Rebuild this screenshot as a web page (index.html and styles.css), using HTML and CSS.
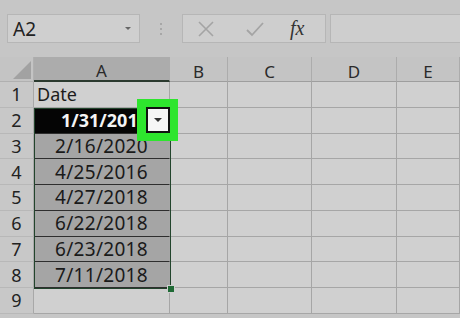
FILE: index.html
```html
<!DOCTYPE html>
<html lang="en">
<head>
<meta charset="UTF-8">
<title>Sheet</title>
<link rel="stylesheet" href="styles.css">
</head>
<body>
<div class="toolbar">
	<div class="namebox"><span>A2</span><span class="caret"></span></div>
	<div class="dots"><i></i><i></i><i></i></div>
	<div class="fnbox">
		<svg class="ico" width="22" height="22" viewBox="0 0 22 22"><path d="M4 4 L18 18 M18 4 L4 18" stroke="#a4a4a4" stroke-width="1.6" fill="none"/></svg>
		<svg class="ico" width="22" height="22" viewBox="0 0 22 22"><path d="M3 12 L8 17 L19 5" stroke="#a4a4a4" stroke-width="1.8" fill="none"/></svg>
		<span class="fx">fx</span>
	</div>
	<div class="formula"></div>
</div>

<div class="sheet">
	<div class="grid">
		<div class="corner"><span class="tri"></span></div>
		<div class="colhead sel">A</div>
		<div class="colhead">B</div>
		<div class="colhead">C</div>
		<div class="colhead">D</div>
		<div class="colhead">E</div>

		<div class="rowhead">1</div><div class="cell text">Date</div><div class="cell"></div><div class="cell"></div><div class="cell"></div><div class="cell"></div>
		<div class="rowhead">2</div><div class="cell active">1/31/2019</div><div class="cell"></div><div class="cell"></div><div class="cell"></div><div class="cell"></div>
		<div class="rowhead">3</div><div class="cell picked">2/16/2020</div><div class="cell"></div><div class="cell"></div><div class="cell"></div><div class="cell"></div>
		<div class="rowhead">4</div><div class="cell picked">4/25/2016</div><div class="cell"></div><div class="cell"></div><div class="cell"></div><div class="cell"></div>
		<div class="rowhead">5</div><div class="cell picked">4/27/2018</div><div class="cell"></div><div class="cell"></div><div class="cell"></div><div class="cell"></div>
		<div class="rowhead">6</div><div class="cell picked">6/22/2018</div><div class="cell"></div><div class="cell"></div><div class="cell"></div><div class="cell"></div>
		<div class="rowhead">7</div><div class="cell picked">6/23/2018</div><div class="cell"></div><div class="cell"></div><div class="cell"></div><div class="cell"></div>
		<div class="rowhead">8</div><div class="cell picked">7/11/2018</div><div class="cell"></div><div class="cell"></div><div class="cell"></div><div class="cell"></div>
		<div class="rowhead">9</div><div class="cell"></div><div class="cell"></div><div class="cell"></div><div class="cell"></div><div class="cell"></div>
	</div>
	<!-- selection frame and the filter button callout lie over the grid -->
	<div class="selframe"><span class="handle"></span></div>
	<div class="callout"><div class="dropbtn"><span class="caret dark"></span></div></div>
</div>
</body>
</html>
```

FILE: styles.css
```css
html, body {
	margin: 0;
	padding: 0;
}
body {
	width: 460px;
	height: 318px;
	overflow: hidden;
	background: #c6c6c6;
	font-family: "Noto Sans", "Open Sans", sans-serif;
	color: #1c1c1c;
}
.toolbar {
	display: flex;
	align-items: center;
	height: 57px;
	padding: 0 0 0 7px;
	box-sizing: border-box;
}
.namebox {
	width: 133px;
	height: 29px;
	box-sizing: border-box;
	background: #cfcfcf;
	border: 1px solid #b6b6b6;
	display: flex;
	align-items: center;
	justify-content: space-between;
	padding: 0 8px 0 5px;
	font-size: 19px;
	color: #222;
}
.caret {
	width: 0;
	height: 0;
	border-left: 3px solid transparent;
	border-right: 3px solid transparent;
	border-top: 3px solid #666;
}
.caret.dark {
	border-left-width: 4px;
	border-right-width: 4px;
	border-top: 4px solid #333;
}
.dots {
	width: 42px;
	display: flex;
	flex-direction: column;
	align-items: center;
	gap: 3px;
}
.dots i {
	width: 2px;
	height: 2px;
	background: #9c9c9c;
	border-radius: 1px;
}
.fnbox {
	width: 144px;
	height: 29px;
	box-sizing: border-box;
	background: #cecece;
	border: 1px solid #b6b6b6;
	display: flex;
	align-items: center;
	padding-left: 12px;
	gap: 27px;
}
.fx {
	font-family: "Liberation Serif", serif;
	font-style: italic;
	font-size: 20px;
	color: #333;
	margin-left: -3px;
}
.formula {
	flex: 1;
	height: 29px;
	margin-left: 4px;
	box-sizing: border-box;
	background: #cecece;
	border: 1px solid #b6b6b6;
	border-right: none;
}
.sheet {
	position: relative;
}
.grid {
	display: grid;
	grid-template-columns: 34px 136px 58px 84px 85px 63px;
	grid-template-rows: 25px repeat(9, 25.75px);
}
.corner {
	background: #c4c4c4;
	border-right: 1px solid #b0b0b0;
	border-bottom: 1px solid #b0b0b0;
	position: relative;
}
.tri {
	position: absolute;
	right: 2px;
	bottom: 2px;
	width: 0;
	height: 0;
	border-left: 18px solid transparent;
	border-bottom: 18px solid #a2a2a2;
}
.colhead {
	background: #c4c4c4;
	border-right: 1px solid #acacac;
	border-bottom: 1px solid #9e9e9e;
	display: flex;
	align-items: center;
	justify-content: center;
	font-size: 17px;
	color: #2a2a2a;
	padding-top: 4px;
	box-sizing: border-box;
}
.colhead.sel {
	background: #acacac;
	border-bottom: 2px solid #2b3a2f;
}
.rowhead {
	background: #c8c8c8;
	border-right: 1px solid #a8a8a8;
	border-bottom: 1px solid #b8b8b8;
	display: flex;
	align-items: center;
	justify-content: center;
	font-size: 18px;
	color: #222;
	box-sizing: border-box;
}
.cell {
	background: #d0d0d0;
	border-right: 1px solid #a6a6a6;
	border-bottom: 1px solid #a6a6a6;
	box-sizing: border-box;
	display: flex;
	align-items: center;
	justify-content: center;
	font-size: 19px;
	white-space: nowrap;
	overflow: hidden;
}
.cell.text {
	justify-content: flex-start;
	padding-left: 3px;
	font-size: 18px;
}
.cell.picked {
	background: #a5a5a5;
	border-bottom: 1px solid #2e2e2e;
	color: #1a1a1a;
	letter-spacing: 0.3px;
}
.cell.active {
	background: #050505;
	color: #f4f4f4;
	font-weight: bold;
	font-size: 18px;
	padding-left: 6px;
	border-bottom: 1px solid #2e2e2e;
}
.selframe {
	position: absolute;
	left: 34px;
	top: 50.75px;
	width: 137px;
	height: 181px;
	box-sizing: border-box;
	border: 1.5px solid #22442c;
}
.handle {
	position: absolute;
	right: -5px;
	bottom: -5px;
	width: 6px;
	height: 6px;
	background: #1f6a35;
	border: 1px solid #d0d0d0;
}
.callout {
	position: absolute;
	left: 137px;
	top: 42px;
	width: 41px;
	height: 42px;
	box-sizing: border-box;
	background: #2ee52e;
	padding: 8px 8px 8px 9px;
}
.dropbtn {
	width: 100%;
	height: 100%;
	box-sizing: border-box;
	background: #f6f6f6;
	border: 2px solid #111;
	display: flex;
	align-items: center;
	justify-content: center;
}
```
